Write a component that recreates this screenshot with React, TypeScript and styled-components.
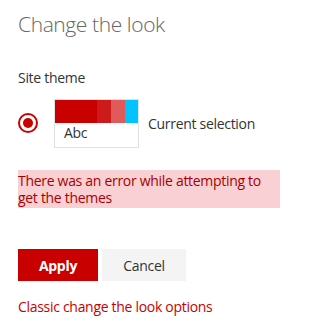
import styled, { createGlobalStyle } from "styled-components";

const GlobalStyle = createGlobalStyle`
  body {
    margin: 0;
    background: #ffffff;
    font-family: "Open Sans", "Noto Sans", sans-serif;
    letter-spacing: -0.3px;
  }
`;

const Panel = styled.div`
  display: flex;
  flex-direction: column;
  width: 298px;
  height: 328px;
  padding: 0 18px;
  box-sizing: border-box;
`;

const Title = styled.h1`
  margin: 10px 0 0;
  font-size: 21px;
  font-weight: 300;
  line-height: 28px;
  color: #666666;
  letter-spacing: -0.4px;
`;

const Label = styled.div`
  margin-top: 30px;
  font-size: 14px;
  line-height: 20px;
  color: #333333;
`;

const ThemeRow = styled.div`
  display: flex;
  align-items: center;
  margin-top: 11px;
`;

const Radio = styled.span`
  display: flex;
  align-items: center;
  justify-content: center;
  width: 20px;
  height: 20px;
  margin-top: -2px;
  box-sizing: border-box;
  border: 2px solid #c80000;
  border-radius: 50%;

  &::after {
    content: "";
    width: 10px;
    height: 10px;
    border-radius: 50%;
    background: #c80000;
  }
`;

const Swatch = styled.div`
  display: flex;
  flex-direction: column;
  width: 85px;
  margin-left: 16px;
  border: 1px solid #e1e1e1;
  box-sizing: border-box;
`;

const Colors = styled.div`
  display: flex;
  height: 23px;
`;

const Color = styled.span<{ $w: number; $c: string }>`
  width: ${(p) => p.$w}px;
  background: ${(p) => p.$c};
`;

const Sample = styled.div`
  height: 24px;
  padding-left: 9px;
  font-size: 14px;
  line-height: 20px;
  color: #333333;
`;

const Caption = styled.span`
  margin-left: 9px;
  font-size: 14px;
  color: #333333;
`;

const ErrorBox = styled.div`
  margin-top: 22px;
  padding: 2px 0;
  background: #f9d0d4;
  color: #a80000;
  font-size: 14px;
  line-height: 17px;
`;

const Actions = styled.div`
  display: flex;
  gap: 4px;
  margin-top: 41px;
`;

const Button = styled.button<{ $primary?: boolean }>`
  height: 32px;
  padding: 0;
  border: none;
  font-family: inherit;
  letter-spacing: inherit;
  font-size: 14px;
  font-weight: ${(p) => (p.$primary ? 700 : 400)};
  width: ${(p) => (p.$primary ? 80 : 84)}px;
  background: ${(p) => (p.$primary ? "#c80000" : "#f4f4f4")};
  color: ${(p) => (p.$primary ? "#ffffff" : "#333333")};
`;

const Link = styled.a`
  margin-top: 16px;
  font-size: 14px;
  line-height: 20px;
  color: #c80000;
  text-decoration: none;
`;

const palette = [
  { w: 42, c: "#c80000" },
  { w: 14, c: "#cd1a1a" },
  { w: 14, c: "#e05a5c" },
  { w: 13, c: "#00c3ff" },
];

export default function App() {
  return (
    <>
      <GlobalStyle />
      <Panel>
        <Title>Change the look</Title>
        <Label>Site theme</Label>
        <ThemeRow>
          <Radio />
          <Swatch>
            <Colors>
              {palette.map((p) => (
                <Color key={p.c} $w={p.w} $c={p.c} />
              ))}
            </Colors>
            <Sample>Abc</Sample>
          </Swatch>
          <Caption>Current selection</Caption>
        </ThemeRow>
        <ErrorBox>There was an error while attempting to get the themes</ErrorBox>
        <Actions>
          <Button $primary>Apply</Button>
          <Button>Cancel</Button>
        </Actions>
        <Link href="#">Classic change the look options</Link>
      </Panel>
    </>
  );
}
